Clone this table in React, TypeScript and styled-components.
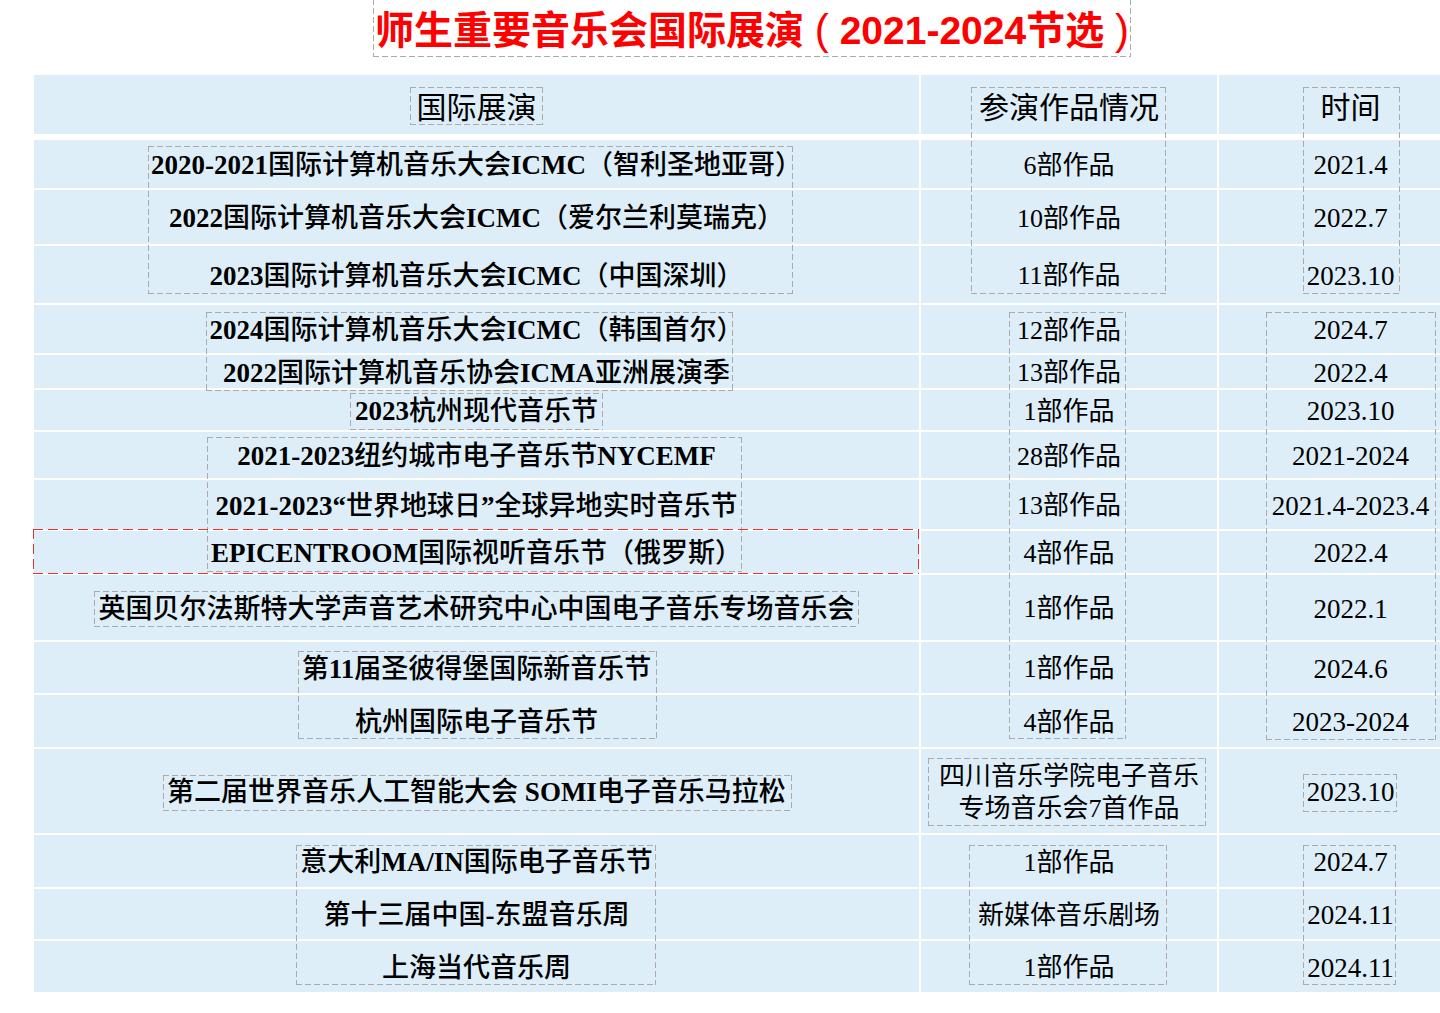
import React from "react";
import styled, { createGlobalStyle, css } from "styled-components";

const GlobalStyle = createGlobalStyle`
  html, body {
    margin: 0;
    padding: 0;
    background: #ffffff;
    overflow: hidden;
  }
  body {
    font-family: "Liberation Serif", "Noto Sans CJK SC", serif;
    color: #000;
  }
`;

const BLUE = "#ddeef8";

const Page = styled.div`
  width: 1440px;
  height: 1013px;
  overflow: hidden;
  display: flex;
  flex-direction: column;
`;

const TitleBar = styled.div`
  display: flex;
  padding-left: 373px;
  margin-top: -1px;
`;

const dashed = (color: string, dash: number, gap: number) => {
  const size = dash + gap;
  const pct = (dash / size) * 100;
  return css`
    background:
      linear-gradient(to right, ${color} ${pct}%, transparent ${pct}%) top left / ${size}px 1px repeat-x,
      linear-gradient(to right, ${color} ${pct}%, transparent ${pct}%) bottom left / ${size}px 1px repeat-x,
      linear-gradient(to bottom, ${color} ${pct}%, transparent ${pct}%) top left / 1px ${size}px repeat-y,
      linear-gradient(to bottom, ${color} ${pct}%, transparent ${pct}%) top right / 1px ${size}px repeat-y;
  `;
};

const TitleFrame = styled.div`
  width: 758px;
  height: 58px;
  box-sizing: border-box;
  display: flex;
  align-items: center;
  justify-content: center;
  ${dashed("#aaaaaa", 6, 3)}
`;

const TitleText = styled.h1`
  margin: 0;
  padding-top: 3px;
  font-family: "Liberation Sans", "Noto Sans CJK SC", sans-serif;
  font-weight: 700;
  font-size: 39px;
  line-height: 1;
  color: #ff0000;
  white-space: pre;
  letter-spacing: 0;
`;

const Paren = styled.span`
  font-size: 42px;
  font-weight: 400;
`;

const Table = styled.div`
  margin-top: 18px;
  margin-left: 34px;
  width: 1448px;
  display: grid;
  grid-template-columns: 885px 296px 263px;
  grid-template-rows: 63px 48px 54px 57px 48px 33px 40px 46px 49px 42px 65px 51px 52px 84px 52px 50px 51px;
  column-gap: 2px;
  row-gap: 2px;
  background: #ffffff;
`;

const Cell = styled.div<{ $col: number; $row: number; $head?: boolean }>`
  grid-column: ${(p) => p.$col};
  grid-row: ${(p) => p.$row};
  background: ${BLUE};
  display: flex;
  align-items: center;
  justify-content: center;
  text-align: center;
  padding-top: ${(p) => (p.$head ? "0" : "3px")};
  box-sizing: border-box;
  white-space: nowrap;
  margin-bottom: ${(p) => (p.$head ? "4px" : "0")};
`;

const HeadText = styled.span`
  font-family: "Noto Sans CJK SC", sans-serif;
  font-size: 30px;
  font-weight: 400;
  line-height: 1;
`;

const NameText = styled.span`
  font-size: 27px;
  line-height: 1;
  font-weight: 500;
`;

const Latin = styled.span`
  font-family: "Liberation Serif", serif;
  font-weight: 700;
`;

const WorksText = styled.span`
  font-size: 26px;
  line-height: 32px;
  font-weight: 400;
  white-space: pre-line;
`;

const TimeText = styled.span`
  font-size: 27px;
  line-height: 1;
  font-weight: 400;
`;

const Frame = styled.div<{
  $col: number;
  $rows: string;
  $x: number;
  $w: number;
  $top: number;
  $h: number;
  $red?: boolean;
}>`
  grid-column: ${(p) => p.$col};
  grid-row: ${(p) => p.$rows};
  justify-self: start;
  align-self: start;
  margin-left: ${(p) => p.$x}px;
  margin-top: ${(p) => p.$top}px;
  width: ${(p) => p.$w}px;
  height: ${(p) => p.$h}px;
  pointer-events: none;
  z-index: 1;
  ${(p) => (p.$red ? dashed("#e8302c", 10, 5) : dashed("#aaaaaa", 6, 3))}
`;

type Row = { name: string; works: string; time: string };

const rows: Row[] = [
  { name: "2020-2021国际计算机音乐大会ICMC（智利圣地亚哥）", works: "6部作品", time: "2021.4" },
  { name: "2022国际计算机音乐大会ICMC（爱尔兰利莫瑞克）", works: "10部作品", time: "2022.7" },
  { name: "2023国际计算机音乐大会ICMC（中国深圳）", works: "11部作品", time: "2023.10" },
  { name: "2024国际计算机音乐大会ICMC（韩国首尔）", works: "12部作品", time: "2024.7" },
  { name: "2022国际计算机音乐协会ICMA亚洲展演季", works: "13部作品", time: "2022.4" },
  { name: "2023杭州现代音乐节", works: "1部作品", time: "2023.10" },
  { name: "2021-2023纽约城市电子音乐节NYCEMF", works: "28部作品", time: "2021-2024" },
  { name: "2021-2023“世界地球日”全球异地实时音乐节", works: "13部作品", time: "2021.4-2023.4" },
  { name: "EPICENTROOM国际视听音乐节（俄罗斯）", works: "4部作品", time: "2022.4" },
  { name: "英国贝尔法斯特大学声音艺术研究中心中国电子音乐专场音乐会", works: "1部作品", time: "2022.1" },
  { name: "第11届圣彼得堡国际新音乐节", works: "1部作品", time: "2024.6" },
  { name: "杭州国际电子音乐节", works: "4部作品", time: "2023-2024" },
  { name: "第二届世界音乐人工智能大会 SOMI电子音乐马拉松", works: "四川音乐学院电子音乐\n专场音乐会7首作品", time: "2023.10" },
  { name: "意大利MA/IN国际电子音乐节", works: "1部作品", time: "2024.7" },
  { name: "第十三届中国-东盟音乐周", works: "新媒体音乐剧场", time: "2024.11" },
  { name: "上海当代音乐周", works: "1部作品", time: "2024.11" },
];

type FrameSpec = { col: number; rows: string; x: number; w: number; top: number; h: number; red?: boolean };

const frames: FrameSpec[] = [
  { col: 1, rows: "1 / 2", x: 376, w: 133, top: 12, h: 38 },
  { col: 1, rows: "2 / 5", x: 114, w: 645, top: 6, h: 148 },
  { col: 1, rows: "5 / 7", x: 172, w: 527, top: 7, h: 79 },
  { col: 1, rows: "7 / 8", x: 316, w: 253, top: 3, h: 37 },
  { col: 1, rows: "8 / 11", x: 173, w: 535, top: 5, h: 135 },
  { col: 1, rows: "11 / 12", x: 60, w: 765, top: 16, h: 36 },
  { col: 1, rows: "12 / 14", x: 264, w: 359, top: 9, h: 88 },
  { col: 1, rows: "14 / 15", x: 129, w: 629, top: 26, h: 36 },
  { col: 1, rows: "15 / 18", x: 262, w: 360, top: 10, h: 140 },
  { col: 2, rows: "1 / 5", x: 50, w: 195, top: 12, h: 207 },
  { col: 2, rows: "5 / 14", x: 88, w: 117, top: 7, h: 427 },
  { col: 2, rows: "14 / 15", x: 7, w: 278, top: 9, h: 68 },
  { col: 2, rows: "15 / 18", x: 48, w: 198, top: 10, h: 140 },
  { col: 3, rows: "1 / 5", x: 84, w: 97, top: 12, h: 207 },
  { col: 3, rows: "5 / 14", x: 47, w: 170, top: 7, h: 428 },
  { col: 3, rows: "14 / 15", x: 84, w: 94, top: 25, h: 38 },
  { col: 3, rows: "15 / 18", x: 84, w: 93, top: 10, h: 140 },
  { col: 1, rows: "10 / 11", x: -1, w: 886, top: -2, h: 45, red: true },
];

const LATIN_RE = /([A-Za-z0-9\-./ “”]+)/;
const LATIN_ONLY = /^[A-Za-z0-9\-./ “”]+$/;

const Mixed: React.FC<{ text: string }> = ({ text }) => {
  const parts = text.split(LATIN_RE).filter((s) => s.length > 0);
  return (
    <>
      {parts.map((p, i) =>
        LATIN_ONLY.test(p) ? <Latin key={i}>{p}</Latin> : <React.Fragment key={i}>{p}</React.Fragment>
      )}
    </>
  );
};

export default function App() {
  return (
    <Page>
      <GlobalStyle />
      <TitleBar>
        <TitleFrame>
          <TitleText>
            师生重要音乐会国际展演 <Paren>(</Paren> 2021-2024节选 <Paren>)</Paren>
          </TitleText>
        </TitleFrame>
      </TitleBar>
      <Table>
        <Cell $col={1} $row={1} $head>
          <HeadText>国际展演</HeadText>
        </Cell>
        <Cell $col={2} $row={1} $head>
          <HeadText>参演作品情况</HeadText>
        </Cell>
        <Cell $col={3} $row={1} $head>
          <HeadText>时间</HeadText>
        </Cell>
        {rows.map((r, i) => (
          <React.Fragment key={i}>
            <Cell $col={1} $row={i + 2}>
              <NameText>
                <Mixed text={r.name} />
              </NameText>
            </Cell>
            <Cell $col={2} $row={i + 2}>
              <WorksText>{r.works}</WorksText>
            </Cell>
            <Cell $col={3} $row={i + 2}>
              <TimeText>{r.time}</TimeText>
            </Cell>
          </React.Fragment>
        ))}
        {frames.map((f, i) => (
          <Frame key={i} $col={f.col} $rows={f.rows} $x={f.x} $w={f.w} $top={f.top} $h={f.h} $red={f.red} />
        ))}
      </Table>
    </Page>
  );
}
